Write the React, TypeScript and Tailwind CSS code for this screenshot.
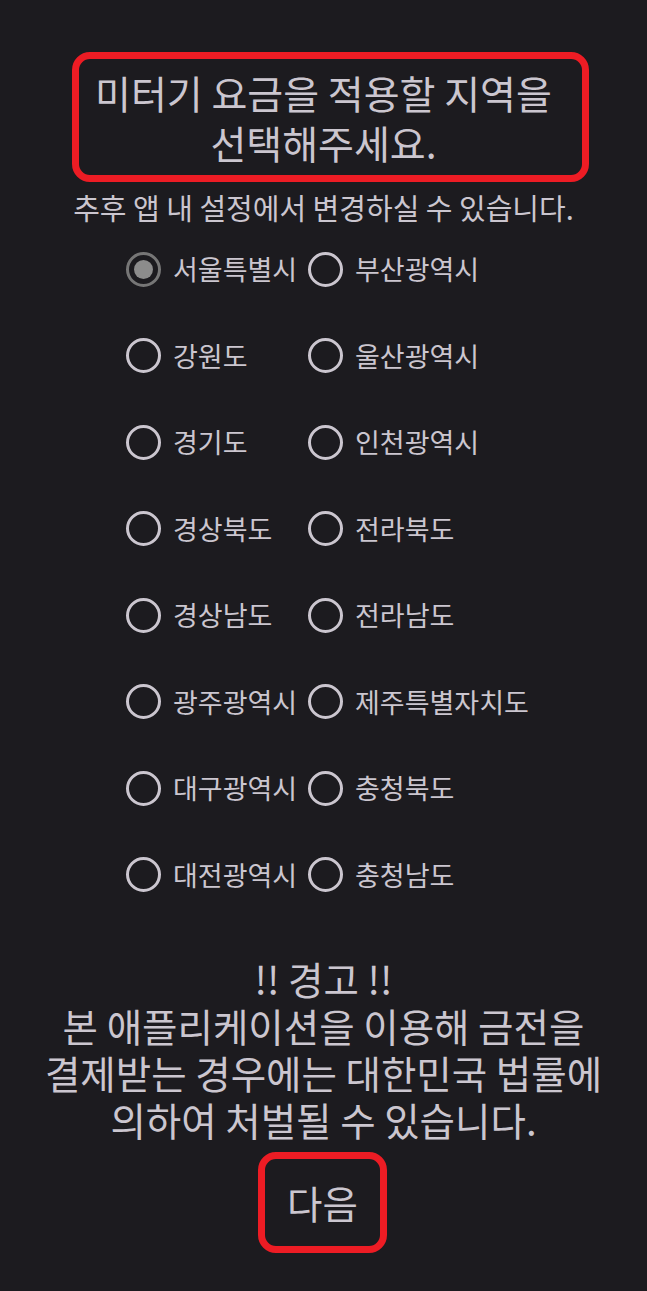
import React from "react";

const left = ["서울특별시", "강원도", "경기도", "경상북도", "경상남도", "광주광역시", "대구광역시", "대전광역시"];
const right = ["부산광역시", "울산광역시", "인천광역시", "전라북도", "전라남도", "제주특별자치도", "충청북도", "충청남도"];

function Radio({ label, selected }: { label: string; selected?: boolean }) {
  return (
    <div className="flex items-center h-[86.5px]">
      {selected ? (
        <div className="w-[35px] h-[35px] shrink-0 rounded-full border-[3px] border-[#767676] flex items-center justify-center">
          <div className="w-[19px] h-[19px] rounded-full bg-[#8c8c8c]" />
        </div>
      ) : (
        <div className="w-[35px] h-[35px] shrink-0 rounded-full border-[3px] border-[#cbc6cf]" />
      )}
      <span className="ml-[12px] text-[27px] leading-[34px] text-[#cbc6cf] whitespace-nowrap">{label}</span>
    </div>
  );
}

export default function App() {
  return (
    <div
      className="w-[647px] h-[1291px] bg-[#1c1b1f] flex flex-col text-[#cbc6cf] overflow-hidden"
      style={{ fontFamily: '"Noto Sans CJK KR", "Noto Sans", sans-serif' }}
    >
      <div className="mt-[52px] ml-[72px] w-[517px] h-[130px] border-[7px] border-[#ed1c24] rounded-[18px] flex flex-col items-center justify-center pr-[14px]">
        <p className="text-[39px] leading-[50px] text-center whitespace-nowrap">
          미터기 요금을 적용할 지역을
          <br />
          선택해주세요.
        </p>
      </div>
      <div className="mt-[8px] text-[29px] leading-[34px] text-center whitespace-nowrap">추후 앱 내 설정에서 변경하실 수 있습니다.</div>
      <div className="mt-[2px] flex pl-[126px]">
        <div className="flex flex-col w-[182px]">
          {left.map((l, i) => (
            <Radio key={l} label={l} selected={i === 0} />
          ))}
        </div>
        <div className="flex flex-col">
          {right.map((l) => (
            <Radio key={l} label={l} />
          ))}
        </div>
      </div>
      <p className="mt-[37px] text-[38.5px] leading-[47px] text-center whitespace-nowrap">
        !! 경고 !!
        <br />
        본 애플리케이션을 이용해 금전을
        <br />
        결제받는 경우에는 대한민국 법률에
        <br />
        의하여 처벌될 수 있습니다.
      </p>
      <div className="mt-[9px] ml-[258px] w-[129px] h-[101px] border-[7px] border-[#ed1c24] rounded-[18px] flex items-center justify-center">
        <span className="text-[38.5px] leading-[47px]">다음</span>
      </div>
    </div>
  );
}
